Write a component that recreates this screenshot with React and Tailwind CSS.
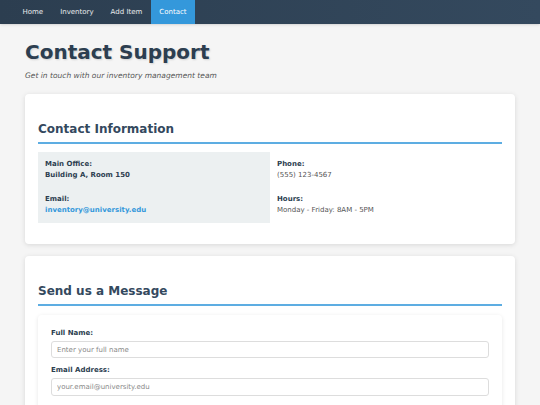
export default function App() {
  const font = { fontFamily: '"DejaVu Sans", Verdana, sans-serif' };
  return (
    <div className="min-h-screen bg-[#f5f5f5] text-[#333]" style={font}>
      {/* Top nav */}
      <nav className="h-[24px] bg-gradient-to-r from-[#2c3e50] to-[#34495e] flex pl-[14px] shadow-sm">
        <a className="px-[8.5px] flex items-center text-[7px] text-white/90">Home</a>
        <a className="px-[8.5px] flex items-center text-[7px] text-white/90">Inventory</a>
        <a className="px-[8.5px] flex items-center text-[7px] text-white/90">Add Item</a>
        <a className="px-[8.5px] flex items-center text-[7px] text-white bg-[#3498db]">Contact</a>
      </nav>

      <main className="px-[25px] pt-[16px]">
        <h1 className="text-[20px] leading-[24px] font-bold text-[#2c3e50] [text-shadow:1px_1px_2px_rgba(0,0,0,0.15)]">
          Contact Support
        </h1>
        <p className="mt-[6px] text-[7.5px] italic text-[#555]">Get in touch with our inventory management team</p>

        {/* Contact info card */}
        <section className="mt-[13px] bg-white rounded-[4px] shadow-[0_1px_5px_rgba(0,0,0,0.12)] px-[13px] pt-[28px] pb-[21px]">
          <h2 className="text-[12px] leading-[15px] font-bold text-[#34495e] pb-[5px] border-b-2 border-[#5dade2]">
            Contact Information
          </h2>
          <div className="mt-[8px] grid grid-cols-2 text-[7px] leading-[11px]">
            <div className="bg-[#ecf0f1] p-[7px] flex flex-col gap-[13px]">
              <div>
                <p className="font-bold text-[#2c3e50]">Main Office:</p>
                <p className="font-bold text-[#2c3e50]">Building A, Room 150</p>
              </div>
              <div>
                <p className="font-bold text-[#2c3e50]">Email:</p>
                <p className="font-bold text-[#3498db]">inventory@university.edu</p>
              </div>
            </div>
            <div className="p-[7px] flex flex-col gap-[13px]">
              <div>
                <p className="font-bold text-[#2c3e50]">Phone:</p>
                <p className="text-[#555]">(555) 123-4567</p>
              </div>
              <div>
                <p className="font-bold text-[#2c3e50]">Hours:</p>
                <p className="text-[#555]">Monday - Friday: 8AM - 5PM</p>
              </div>
            </div>
          </div>
        </section>

        {/* Message card */}
        <section className="mt-[12px] bg-white rounded-[4px] shadow-[0_1px_5px_rgba(0,0,0,0.12)] px-[13px] pt-[28px] pb-[22px]">
          <h2 className="text-[12px] leading-[15px] font-bold text-[#34495e] pb-[5px] border-b-2 border-[#5dade2]">
            Send us a Message
          </h2>
          <form className="mt-[9px] bg-white rounded-[4px] shadow-[0_1px_4px_rgba(0,0,0,0.1)] p-[13px] pt-[13px] flex flex-col">
            <label className="text-[7px] leading-[11px] font-bold text-[#2c3e50]">Full Name:</label>
            <input
              className="mt-[2px] h-[17px] border border-[#ddd] rounded-[3px] px-[5px] text-[7px] placeholder:text-[#888] outline-none"
              placeholder="Enter your full name"
            />
            <label className="mt-[7px] text-[7px] leading-[11px] font-bold text-[#2c3e50]">Email Address:</label>
            <input
              className="mt-[2px] h-[18px] border border-[#ddd] rounded-[3px] px-[5px] text-[7px] placeholder:text-[#888] outline-none"
              placeholder="your.email@university.edu"
            />
          </form>
        </section>
      </main>
    </div>
  );
}
